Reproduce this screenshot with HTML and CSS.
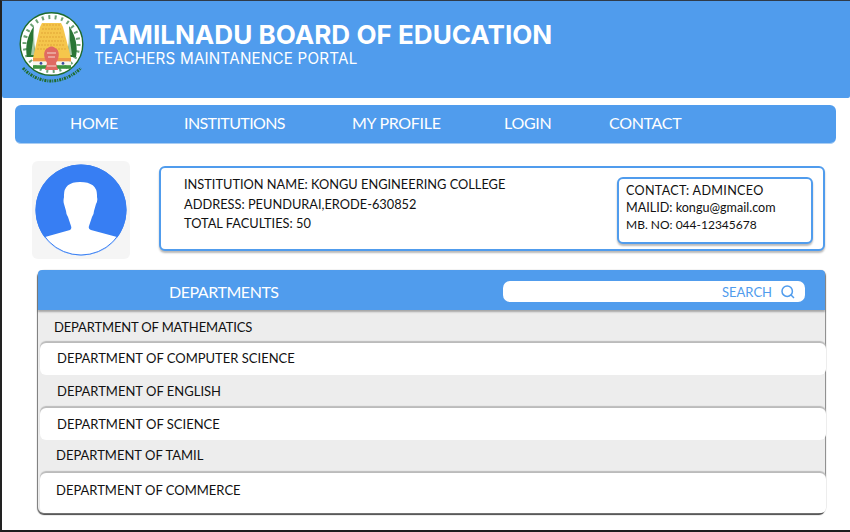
FILE: index.html
```html
<!DOCTYPE html>
<html lang="en">
<head>
<meta charset="utf-8">
<title>Tamilnadu Board of Education</title>
<link rel="stylesheet" href="styles.css">
</head>
<body>
<div class="frame">
  <header class="banner">
    <svg class="emblem" viewBox="0 0 70 74" aria-hidden="true">
      <circle cx="34.5" cy="32" r="31.3" fill="#fff" stroke="#1f6b2c" stroke-width="1.4"/>
      <circle cx="34.5" cy="32" r="27" fill="none" stroke="#2d7a39" stroke-width="4" stroke-dasharray="2 4.5" opacity=".7"/>
      <path d="M10 45C8 35 10 24 17 14c-1 10-1 21 4 31zM59 45c2-10 0-21-7-31 1 10 1 21-4 31z" fill="#2a7636"/>
      <path d="M14 43l3-22 1 22zM55 43l-3-22-1 22z" fill="#a7c9a7"/>
      <path d="M25 11h19l2 4 8 31H16l7-31z" fill="#f5c64c"/>
      <path d="M26 13h17M25 17h19M24 21h21M23 25h23M22 29h25M21 33h27M20 37h29" stroke="#e0a233" stroke-width=".9" stroke-dasharray="2 1"/>
      <rect x="16" y="46" width="38" height="3.6" fill="#ee9a45"/>
      <rect x="16" y="49.6" width="38" height="3.6" fill="#f6f6ee"/>
      <rect x="16" y="53.2" width="38" height="3.6" fill="#3d9440"/>
      <circle cx="24" cy="51.4" r="1.4" fill="#3a4a9e"/>
      <circle cx="46" cy="51.4" r="1.4" fill="#3a4a9e"/>
      <path d="M28 47c-2-6 0-10 3-11 2-2 5-2 7 0 3 1 5 5 3 11l-2 4 2 7H28l2-7z" fill="#e06a62"/>
      <path d="M30 41h9M31 45h7M30 54h9" stroke="#f4d8d0" stroke-width="1"/>
      <path d="M6 56c7 8 18 13 28 13s22-5 30-13" fill="none" stroke="#1f6b2c" stroke-width="3" stroke-dasharray="2 1 1 1"/>
    </svg>
    <div class="banner-text">
      <h1 class="title">TAMILNADU BOARD OF EDUCATION</h1>
      <p class="subtitle">TEACHERS MAINTANENCE PORTAL</p>
    </div>
  </header>

  <nav class="nav">
    <a class="nav-link nav-home">HOME</a>
    <a class="nav-link nav-inst">INSTITUTIONS</a>
    <a class="nav-link nav-prof">MY PROFILE</a>
    <a class="nav-link nav-login">LOGIN</a>
    <a class="nav-link">CONTACT</a>
  </nav>

  <section class="profile">
    <div class="avatar-card">
      <svg class="avatar" viewBox="0 0 92 92" aria-hidden="true">
        <defs><clipPath id="disc"><circle cx="46" cy="46" r="45.5"/></clipPath></defs>
        <circle cx="46" cy="46" r="45.5" fill="#377ef3"/>
        <path clip-path="url(#disc)" d="M10 73L35 66Q37 65 36 62L33 53Q31 50 31 47L29 40Q28 37 29 33Q28 18 45 18Q63 18 62 33Q63 37 61 40L59 47Q59 50 57 53L54 62Q53 65 56 66L82 73V93H10Z" fill="#fff"/>
        <circle cx="46" cy="46" r="45" fill="none" stroke="#377ef3" stroke-width="1"/>
      </svg>
    </div>
    <div class="info">
      <div class="info-main">
        <p class="info-line">INSTITUTION NAME: KONGU ENGINEERING COLLEGE</p>
        <p class="info-line">ADDRESS: PEUNDURAI,ERODE-630852</p>
        <p class="info-line">TOTAL FACULTIES: 50</p>
      </div>
      <div class="contact">
        <p class="contact-line contact-name">CONTACT: ADMINCEO</p>
        <p class="contact-line">MAILID: kongu@gmail.com</p>
        <p class="contact-line contact-phone">MB. NO: 044-12345678</p>
      </div>
    </div>
  </section>

  <section class="panel">
    <div class="panel-head">
      <h2 class="panel-title">DEPARTMENTS</h2>
      <div class="search">
        <span class="search-label">SEARCH</span>
        <svg class="search-icon" viewBox="0 0 14 14" aria-hidden="true">
          <circle cx="6.2" cy="6.2" r="5.2" fill="none" stroke="#509ced" stroke-width="1.5"/>
          <path d="M9.8 9.8l3.2 3.2" stroke="#509ced" stroke-width="1.5" fill="none"/>
        </svg>
      </div>
    </div>
    <div class="row row-grey r1">DEPARTMENT OF MATHEMATICS</div>
    <div class="row row-white r2">DEPARTMENT OF COMPUTER SCIENCE</div>
    <div class="row row-grey r3">DEPARTMENT OF ENGLISH</div>
    <div class="row row-white r4">DEPARTMENT OF SCIENCE</div>
    <div class="row row-grey r5">DEPARTMENT OF TAMIL</div>
    <div class="row row-white r6">DEPARTMENT OF COMMERCE</div>
  </section>
</div>
</body>
</html>
```
FILE: styles.css
```css
* { box-sizing: border-box; }
html, body { margin: 0; padding: 0; }
body { width: 850px; height: 532px; overflow: hidden; background: #fff; font-family: "Lato", "Liberation Sans", sans-serif; color: #111; }
p, h1, h2 { margin: 0; font-weight: normal; }

.frame { width: 850px; height: 532px; border-top: 1px solid #2f3a48; border-left: 2px solid #222; border-bottom: 2px solid #1e1e1e; }

.banner { height: 97px; background: #509ced; border-radius: 0 0 2px 2px; display: flex; align-items: flex-start; padding: 11px 0 0 15px; }
.emblem { width: 70px; height: 74px; flex: none; }
.banner-text { margin-left: 7px; padding-top: 7px; color: #fff; font-family: "Inter", "Liberation Sans", sans-serif; }
.title { font-size: 26.1px; line-height: 32px; font-weight: 700; white-space: nowrap; }
.subtitle { font-size: 15.2px; line-height: 16px; letter-spacing: .2px; white-space: nowrap; }

.nav { margin: 7px 0 0 13px; width: 821px; height: 39px; background: #509ced; border-radius: 6px; border-bottom: 1px solid #a9cdf3; display: flex; align-items: center; padding: 0 0 2px 55px; }
.nav-link { color: #fff; font-size: 16px; line-height: 20px; letter-spacing: -.3px; white-space: nowrap; }
.nav-home { width: 114px; }
.nav-inst { width: 168px; letter-spacing: -.6px; }
.nav-prof { width: 152px; }
.nav-login { width: 105px; }

.profile { display: flex; align-items: flex-start; margin: 17px 0 0 30px; }
.avatar-card { width: 98px; height: 98px; background: #f5f5f5; border-radius: 6px; padding: 3px; flex: none; }
.avatar { display: block; width: 92px; height: 92px; }
.info { margin: 5px 0 0 29px; width: 666px; height: 85px; background: #fff; border: 2px solid #509ced; border-radius: 6px; box-shadow: 0 2px 2px rgba(0,0,0,.28); display: flex; justify-content: space-between; padding: 7px 10px 0 23px; }
.info-line { font-size: 12.8px; line-height: 19.5px; white-space: nowrap; }
.contact { width: 196px; height: 67px; margin-top: 2px; background: #fff; border: 2px solid #509ced; border-radius: 6px; box-shadow: 0 2px 2px rgba(0,0,0,.28); padding: 3px 0 0 7px; }
.contact-line { font-size: 12.6px; line-height: 17px; white-space: nowrap; }
.contact-name { letter-spacing: .3px; }
.contact-phone { font-size: 12px; }

.panel { margin: 11px 0 0 36px; width: 787px; height: 243px; background: #ededed; border-radius: 6px; box-shadow: -1px 1px 1px #777, 1px 0 1px #888, 0 2px 1px #444; display: flex; flex-direction: column; }
.panel-head { position: relative; height: 40px; flex: none; background: #509ced; border-radius: 4px 4px 0 0; box-shadow: 0 2px 2px rgba(0,0,0,.3); display: flex; align-items: center; justify-content: space-between; padding: 3px 20px 0 131px; }
.panel-title { color: #fff; font-size: 16px; line-height: 20px; letter-spacing: -.45px; }
.search { width: 302px; height: 21px; background: #fff; border-radius: 7px; display: flex; align-items: center; justify-content: flex-end; padding-right: 10px; }
.search-label { color: #509ced; font-size: 13px; line-height: 16px; margin-right: 9px; padding-top: 1px; }
.search-icon { width: 14px; height: 14px; display: block; }

.row { font-size: 13px; line-height: 18px; white-space: nowrap; flex: none; }
.row-grey { background: #ededed; height: 33px; }
.row-white { background: #fff; height: 32px; margin: 0 -1px 0 2px; border-radius: 6px; box-shadow: 0 -2px 1px #bbb; }
.r1 { padding: 8px 0 0 16px; letter-spacing: -.15px; }
.r2 { padding: 6px 0 0 17px; }
.r3 { padding: 7px 0 0 19px; }
.r4 { padding: 7px 0 0 17px; }
.r5 { padding: 6px 0 0 18px; }
.r6 { padding: 8px 0 0 16px; height: 40px; border-radius: 6px 6px 5px 5px; }
```
